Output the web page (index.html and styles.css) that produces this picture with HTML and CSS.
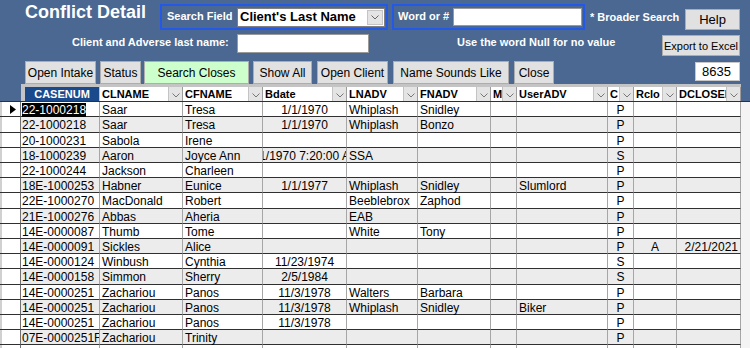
FILE: index.html
```html
<!DOCTYPE html>
<html>
<head>
    <meta charset="utf-8" />
    <title>Conflict Detail</title>
    <link rel="stylesheet" href="styles.css">
</head>
<body>
    <div class="top">
        <div class="bar bar1">
            <h1 class="title">Conflict Detail</h1>
            <div class="group search-group">
                <span class="lbl">Search Field</span>
                <div class="combo">
                    <span class="combo-text">Client's Last Name</span>
                    <span class="combo-btn"><svg width="8" height="5" viewBox="0 0 8 5"><path d="M0.5 0.5L4 4L7.5 0.5" fill="none" stroke="#666"/></svg></span>
                </div>
            </div>
            <div class="group word-group">
                <span class="lbl">Word or #</span>
                <input class="field word-field" type="text">
            </div>
            <span class="lbl broader">* Broader Search</span>
            <button class="btn help">Help</button>
        </div>
        <div class="bar bar2">
            <span class="lbl names-lbl">Client and Adverse last name:</span>
            <input class="field names-field" type="text">
            <span class="lbl null-lbl">Use the word Null for no value</span>
            <button class="btn export">Export to Excel</button>
        </div>
        <div class="bar bar3">
            <button class="btn open-intake">Open Intake</button>
            <button class="btn status">Status</button>
            <button class="btn closes">Search Closes</button>
            <button class="btn show-all">Show All</button>
            <button class="btn open-client">Open Client</button>
            <button class="btn sounds">Name Sounds Like</button>
            <button class="btn close">Close</button>
            <div class="count">8635</div>
        </div>
    </div>

    <div class="sheet">
        <div class="cols head">
            <b class="hsel"></b>
            <div class="h key"><span class="t">CASENUM</span></div>
            <div class="h"><span class="t">CLNAME</span><span class="dd"><svg width="8" height="5" viewBox="0 0 8 5"><path d="M0.5 0.5L4 4L7.5 0.5" fill="none" stroke="#777"/></svg></span></div>
            <div class="h"><span class="t">CFNAME</span><span class="dd"><svg width="8" height="5" viewBox="0 0 8 5"><path d="M0.5 0.5L4 4L7.5 0.5" fill="none" stroke="#777"/></svg></span></div>
            <div class="h"><span class="t">Bdate</span><span class="dd"><svg width="8" height="5" viewBox="0 0 8 5"><path d="M0.5 0.5L4 4L7.5 0.5" fill="none" stroke="#777"/></svg></span></div>
            <div class="h"><span class="t">LNADV</span><span class="dd"><svg width="8" height="5" viewBox="0 0 8 5"><path d="M0.5 0.5L4 4L7.5 0.5" fill="none" stroke="#777"/></svg></span></div>
            <div class="h"><span class="t">FNADV</span><span class="dd"><svg width="8" height="5" viewBox="0 0 8 5"><path d="M0.5 0.5L4 4L7.5 0.5" fill="none" stroke="#777"/></svg></span></div>
            <div class="h"><span class="t">M</span><span class="dd"><svg width="8" height="5" viewBox="0 0 8 5"><path d="M0.5 0.5L4 4L7.5 0.5" fill="none" stroke="#777"/></svg></span></div>
            <div class="h"><span class="t">UserADV</span><span class="dd"><svg width="8" height="5" viewBox="0 0 8 5"><path d="M0.5 0.5L4 4L7.5 0.5" fill="none" stroke="#777"/></svg></span></div>
            <div class="h"><span class="t">C</span><span class="dd"><svg width="8" height="5" viewBox="0 0 8 5"><path d="M0.5 0.5L4 4L7.5 0.5" fill="none" stroke="#777"/></svg></span></div>
            <div class="h"><span class="t">Rclo</span><span class="dd"><svg width="8" height="5" viewBox="0 0 8 5"><path d="M0.5 0.5L4 4L7.5 0.5" fill="none" stroke="#777"/></svg></span></div>
            <div class="h"><span class="t">DCLOSED</span><span class="dd"><svg width="8" height="5" viewBox="0 0 8 5"><path d="M0.5 0.5L4 4L7.5 0.5" fill="none" stroke="#777"/></svg></span></div>
            <b class="hfill"></b>
        </div>

        <div class="cols row"><i class="sel"><svg width="6" height="9" viewBox="0 0 6 9"><path d="M0 0L6 4.5L0 9Z" fill="#000"/></svg></i><span class="k"><em class="pick">22-1000218</em></span><span>Saar</span><span>Tresa</span><span class="c">1/1/1970</span><span>Whiplash</span><span>Snidley</span><span></span><span></span><span class="c">P</span><span></span><span></span><b class="fill"></b></div>
        <div class="cols row"><i class="sel"></i><span class="k">22-1000218</span><span>Saar</span><span>Tresa</span><span class="c">1/1/1970</span><span>Whiplash</span><span>Bonzo</span><span></span><span></span><span class="c">P</span><span></span><span></span><b class="fill"></b></div>
        <div class="cols row"><i class="sel"></i><span class="k">20-1000231</span><span>Sabola</span><span>Irene</span><span class="c"></span><span></span><span></span><span></span><span></span><span class="c">P</span><span></span><span></span><b class="fill"></b></div>
        <div class="cols row"><i class="sel"></i><span class="k">18-1000239</span><span>Aaron</span><span>Joyce Ann</span><span class="c">1/1/1970 7:20:00 AM</span><span>SSA</span><span></span><span></span><span></span><span class="c">S</span><span></span><span></span><b class="fill"></b></div>
        <div class="cols row"><i class="sel"></i><span class="k">22-1000244</span><span>Jackson</span><span>Charleen</span><span class="c"></span><span></span><span></span><span></span><span></span><span class="c">P</span><span></span><span></span><b class="fill"></b></div>
        <div class="cols row"><i class="sel"></i><span class="k">18E-1000253</span><span>Habner</span><span>Eunice</span><span class="c">1/1/1977</span><span>Whiplash</span><span>Snidley</span><span></span><span>Slumlord</span><span class="c">P</span><span></span><span></span><b class="fill"></b></div>
        <div class="cols row"><i class="sel"></i><span class="k">22E-1000270</span><span>MacDonald</span><span>Robert</span><span class="c"></span><span>Beeblebrox</span><span>Zaphod</span><span></span><span></span><span class="c">P</span><span></span><span></span><b class="fill"></b></div>
        <div class="cols row"><i class="sel"></i><span class="k">21E-1000276</span><span>Abbas</span><span>Aheria</span><span class="c"></span><span>EAB</span><span></span><span></span><span></span><span class="c">P</span><span></span><span></span><b class="fill"></b></div>
        <div class="cols row"><i class="sel"></i><span class="k">14E-0000087</span><span>Thumb</span><span>Tome</span><span class="c"></span><span>White</span><span>Tony</span><span></span><span></span><span class="c">P</span><span></span><span></span><b class="fill"></b></div>
        <div class="cols row"><i class="sel"></i><span class="k">14E-0000091</span><span>Sickles</span><span>Alice</span><span class="c"></span><span></span><span></span><span></span><span></span><span class="c">P</span><span class="c">A</span><span class="r">2/21/2021</span><b class="fill"></b></div>
        <div class="cols row"><i class="sel"></i><span class="k">14E-0000124</span><span>Winbush</span><span>Cynthia</span><span class="c">11/23/1974</span><span></span><span></span><span></span><span></span><span class="c">S</span><span></span><span></span><b class="fill"></b></div>
        <div class="cols row"><i class="sel"></i><span class="k">14E-0000158</span><span>Simmon</span><span>Sherry</span><span class="c">2/5/1984</span><span></span><span></span><span></span><span></span><span class="c">S</span><span></span><span></span><b class="fill"></b></div>
        <div class="cols row"><i class="sel"></i><span class="k">14E-0000251</span><span>Zachariou</span><span>Panos</span><span class="c">11/3/1978</span><span>Walters</span><span>Barbara</span><span></span><span></span><span class="c">P</span><span></span><span></span><b class="fill"></b></div>
        <div class="cols row"><i class="sel"></i><span class="k">14E-0000251</span><span>Zachariou</span><span>Panos</span><span class="c">11/3/1978</span><span>Whiplash</span><span>Snidley</span><span></span><span>Biker</span><span class="c">P</span><span></span><span></span><b class="fill"></b></div>
        <div class="cols row"><i class="sel"></i><span class="k">14E-0000251</span><span>Zachariou</span><span>Panos</span><span class="c">11/3/1978</span><span></span><span></span><span></span><span></span><span class="c">P</span><span></span><span></span><b class="fill"></b></div>
        <div class="cols row"><i class="sel"></i><span class="k">07E-0000251F</span><span>Zachariou</span><span>Trinity</span><span class="c"></span><span></span><span></span><span></span><span></span><span class="c">P</span><span></span><span></span><b class="fill"></b></div>
        <div class="cols row"><i class="sel"></i><span class="k"></span><span></span><span></span><span class="c"></span><span></span><span></span><span></span><span></span><span class="c"></span><span></span><span></span><b class="fill"></b></div>
    </div>
</body>
</html>
```

FILE: styles.css
```css
html, body {
    margin: 0;
    width: 750px;
    height: 348px;
    overflow: hidden;
}
body {
    background: #4a6892;
    font-family: "Liberation Sans", Arial, sans-serif;
}

/* form header */
.top {
    height: 84px;
}
.bar {
    display: flex;
    align-items: flex-start;
    padding-right: 10px;
}
.bar1 { height: 32px; }
.bar2 { height: 26px; }
.bar3 { height: 26px; }

.title {
    flex: none;
    width: 135px;
    margin: 2px 0 0 25px;
    font-size: 18px;
    line-height: 20px;
    font-weight: bold;
    color: #fff;
}
.lbl {
    color: #fff;
    font-size: 11px;
    font-weight: bold;
    line-height: 13px;
    white-space: nowrap;
}
.group {
    box-sizing: border-box;
    height: 26px;
    margin-top: 4px;
    border: 2px solid #2458e6;
    display: flex;
    align-items: center;
    justify-content: space-between;
}
.group .lbl {
    margin-bottom: 2px;
}
.search-group {
    width: 228px;
    padding: 0 1px 0 5px;
}
.word-group {
    width: 193px;
    margin-left: 4px;
    padding: 0 1px 0 4px;
}
.combo {
    box-sizing: border-box;
    width: 148px;
    height: 19px;
    background: #fff;
    border: 1px solid #7f7f7f;
    display: flex;
}
.combo-text {
    flex: 1;
    padding-left: 2px;
    font-size: 13px;
    font-weight: bold;
    line-height: 16px;
    color: #000;
    white-space: nowrap;
}
.combo-btn {
    width: 14px;
    margin: 1px;
    background: #e4e4e4;
    border: 1px solid #c4c4c4;
    display: flex;
    align-items: center;
    justify-content: center;
}
.field {
    box-sizing: border-box;
    margin: 0;
    padding: 0;
    background: #fff;
    border: 1px solid #9a9a9a;
}
.word-field {
    width: 129px;
    height: 18px;
}
.broader {
    margin: 11px 0 0 5px;
}
.btn {
    box-sizing: border-box;
    margin: 0;
    padding: 0;
    background: #e1e1e1;
    border: 1px solid #adadad;
    font-family: inherit;
    font-size: 12px;
    color: #000;
    white-space: nowrap;
}
.help {
    margin: 9px 0 0 auto;
    width: 55px;
    height: 21px;
    font-size: 13px;
}

.names-lbl {
    width: 160px;
    margin: 4px 0 0 72px;
}
.names-field {
    width: 132px;
    height: 19px;
    margin: 2px 0 0 5px;
}
.null-lbl {
    margin: 4px 0 0 88px;
}
.export {
    margin: 3px 0 0 auto;
    width: 78px;
    height: 21px;
    font-size: 11px;
}

.bar3 .btn {
    height: 23px;
    margin-top: 3px;
}
.open-intake { width: 71px; margin-left: 25px; }
.bar3 .status { width: 41px; margin-left: 4px; }
.bar3 .closes { width: 105px; margin-left: 3px; background: #ccffcc; }
.bar3 .show-all { width: 59px; margin-left: 4px; }
.bar3 .open-client { width: 71px; margin-left: 5px; }
.bar3 .sounds { width: 116px; margin-left: 5px; }
.bar3 .close { width: 40px; margin-left: 5px; }
.count {
    box-sizing: border-box;
    width: 45px;
    height: 19px;
    margin: 4px 0 0 auto;
    padding-right: 8px;
    background: #fff;
    border: 1px solid #c8c8c8;
    font-size: 13px;
    line-height: 17px;
    text-align: right;
}

/* datasheet */
.cols {
    display: grid;
    grid-template-columns: 21px 79px 83px 80px 84px 71px 73px 26px 91px 26px 43px 64px 9px;
}
.head {
    box-sizing: border-box;
    height: 18px;
    padding-top: 3px;
    border-bottom: 1px solid #303030;
    background: linear-gradient(to right, #4a6892 21px, #c4c4c4 21px, #c4c4c4 741px, #4a6892 741px);
}
.h {
    display: flex;
    background: #fff;
    border-right: 1px solid #9c9c9c;
    overflow: hidden;
}
.h .t {
    flex: 1;
    padding-left: 2px;
    font-size: 11px;
    font-weight: bold;
    line-height: 15px;
    white-space: nowrap;
    overflow: hidden;
}
.h .dd {
    flex: none;
    width: 13px;
    background: #e4e4e4;
    border-left: 1px solid #c4c4c4;
    display: flex;
    align-items: flex-end;
    justify-content: center;
    padding-bottom: 3px;
}
.h.key {
    margin-left: 4px;
    background: #1b4a8c;
    color: #fff;
    text-align: center;
    border-right: 1px solid #c4c4c4;
}
.h.key .t {
    padding-left: 0;
}

.row {
    height: 15px;
    background: #fff;
    font-size: 12px;
    color: #000;
}
/* rows 2, 7 and 12 are a pixel taller */
.row:nth-child(5n+3) {
    height: 16px;
}
.row:nth-child(odd) > span {
    background: #ececec;
}
.row > span {
    box-sizing: border-box;
    padding: 2px 0 0 2px;
    border-right: 1px solid #a6a6a6;
    border-bottom: 1px solid #303030;
    line-height: 12px;
    white-space: nowrap;
    overflow-x: clip;
}
.row > .k {
    padding-left: 1px;
}
.row > .c {
    display: flex;
    justify-content: center;
    padding-left: 0;
}
.row > .r {
    text-align: right;
    padding-right: 2px;
}
.sel {
    box-sizing: border-box;
    background: #fff;
    border-right: 1px solid #707070;
    border-bottom: 1px solid #303030;
    box-shadow: inset 2px 0 0 #d0d0d0;
    display: flex;
    align-items: center;
    padding-left: 10px;
}
.fill {
    background: #f4f4f4;
}
.pick {
    font-style: normal;
    background: #000;
    color: #fff;
}
```
